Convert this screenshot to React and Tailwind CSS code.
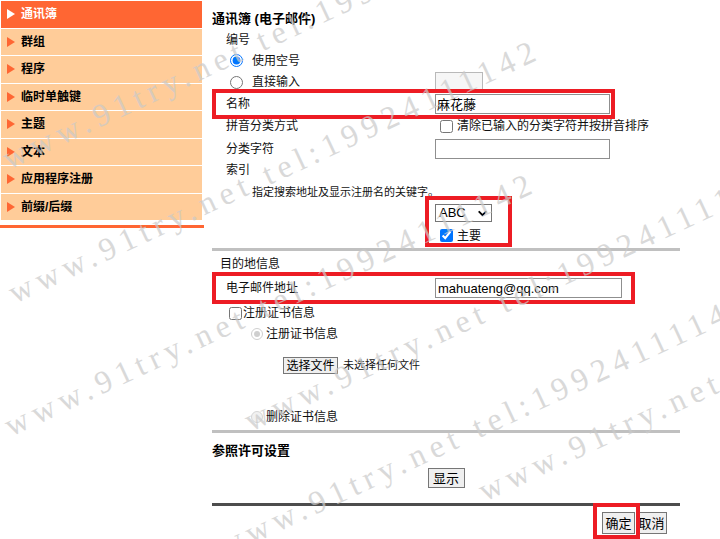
import { ChevronDown } from "lucide-react";

const menu = ["通讯簿", "群组", "程序", "临时单触键", "主题", "文本", "应用程序注册", "前缀/后缀"];

// faint diagonal watermark lines
const marks = [
  { x: -6, y: 138 },
  { x: 0, y: 272 },
  { x: -4, y: 405 },
  { x: 236, y: 400 },
  { x: 210, y: 525 },
  { x: 470, y: 470 },
];

function Arrow({ active }) {
  return (
    <svg width="8" height="10" viewBox="0 0 8 10" className="shrink-0">
      <polygon points="0,0 8,5 0,10" fill={active ? "#ffffff" : "#ff6633"} />
    </svg>
  );
}

function Btn({ children, className = "" }) {
  return (
    <button
      className={`flex items-center justify-center border border-[#767676] bg-[#efefef] text-black leading-none ${className}`}
    >
      {children}
    </button>
  );
}

export default function App() {
  return (
    <div className="relative flex h-[539px] w-[720px] overflow-hidden bg-white font-['Liberation_Sans','Noto_Sans_CJK_SC',sans-serif] text-[12px] text-[#111]">
      {/* side menu */}
      <div className="w-[204px] shrink-0">
        {menu.map((m, i) => (
          <div
            key={m}
            className={`ml-px flex h-[27.5px] w-[201px] items-center gap-[6px] border-t border-white pl-[6px] text-[12px] font-bold ${
              i === 0 ? "bg-[#ff6633] text-white" : "bg-[#ffcc99] text-black"
            }`}
          >
            <Arrow active={i === 0} />
            <span>{m}</span>
          </div>
        ))}
        <div className="mt-[5px] h-[3px] w-[204px] bg-[#ff6633]" />
      </div>

      {/* form */}
      <div className="ml-[8px] w-[468px]">
        <div className="mt-[9px] flex h-[20px] items-center text-[13px] font-bold text-black">
          通讯簿 (电子邮件)
        </div>
        <div className="mt-px flex h-[20px] items-center pl-[14px]">编号</div>
        <div className="flex h-[21px] items-center pl-[18px]">
          <input type="radio" name="num" defaultChecked className="m-0 h-[13px] w-[13px]" />
          <span className="ml-[9px]">使用空号</span>
        </div>
        <div className="flex h-[22px] items-center">
          <div className="flex w-[223px] items-center pl-[18px]">
            <input type="radio" name="num" className="m-0 h-[13px] w-[13px]" />
            <span className="ml-[9px]">直接输入</span>
          </div>
          <div className="h-[20px] w-[48px] border border-[#b9b9b9] bg-[#f6f6f6]" />
        </div>
        <div className="flex h-[21px] items-center">
          <div className="w-[223px] pl-[14px]">名称</div>
          <input
            readOnly
            value="麻花藤"
            className="h-[20px] w-[175px] border border-[#8f8f8f] px-[1px] text-[13px] text-black"
          />
        </div>
        <div className="flex h-[24px] items-center">
          <div className="w-[223px] pl-[14px]">拼音分类方式</div>
          <input type="checkbox" className="m-0 ml-[5px] h-[13px] w-[13px]" />
          <span className="ml-[4px]">清除已输入的分类字符并按拼音排序</span>
        </div>
        <div className="flex h-[21px] items-center">
          <div className="w-[223px] pl-[14px]">分类字符</div>
          <div className="h-[20px] w-[175px] border border-[#8f8f8f]" />
        </div>
        <div className="flex h-[22px] items-center pl-[14px]">索引</div>
        <div className="flex h-[22px] items-center pl-[40px] text-[11px]">指定搜索地址及显示注册名的关键字。</div>
        <div className="flex h-[20px] items-center pl-[223px]">
          <div className="flex h-[18px] w-[57px] items-center justify-between border border-[#767676] pl-[3px] pr-[2px] text-[13px] text-black">
            <span>ABC</span>
            <ChevronDown size={13} strokeWidth={3.5} color="#000" />
          </div>
        </div>
        <div className="flex h-[25px] items-center pl-[228px]">
          <input type="checkbox" defaultChecked className="m-0 h-[13px] w-[13px]" />
          <span className="ml-[4px]">主要</span>
        </div>
        <div className="h-[3px] w-[468px] bg-[#c0c0c0]" />
        <div className="flex h-[25px] items-center pl-[8px]">目的地信息</div>
        <div className="flex h-[24px] items-center">
          <div className="w-[223px] pl-[14px]">电子邮件地址</div>
          <input
            readOnly
            value="mahuateng@qq.com"
            className="h-[20px] w-[187px] border border-[#8f8f8f] px-[2px] text-[13px] text-black"
          />
        </div>
        <div className="flex h-[26px] items-center pl-[17px]">
          <input type="checkbox" className="m-0 h-[13px] w-[13px]" />
          <span className="ml-px">注册证书信息</span>
        </div>
        <div className="flex h-[16px] items-center pl-[39px]">
          <span className="flex h-[12px] w-[12px] items-center justify-center rounded-full border border-[#cfcfcf] bg-white">
            <span className="h-[6px] w-[6px] rounded-full bg-[#cfcfcf]" />
          </span>
          <span className="ml-[3px]">注册证书信息</span>
        </div>
        <div className="mt-[15px] flex h-[17px] items-center pl-[71px]">
          <Btn className="h-[17px] w-[55px] text-[12px]">选择文件</Btn>
          <span className="ml-[5px] text-[11px]">未选择任何文件</span>
        </div>
        <div className="mt-[33px] flex h-[20px] items-center pl-[39px]">
          <span className="h-[12px] w-[12px] rounded-full border border-[#d6d6d6] bg-[#f1f1f1]" />
          <span className="ml-[3px]">删除证书信息</span>
        </div>
        <div className="mt-[3px] h-[3px] w-[468px] bg-[#c0c0c0]" />
        <div className="mt-[8px] flex h-[20px] items-center text-[13px] font-bold text-black">参照许可设置</div>
        <div className="mt-[7px] flex justify-center">
          <Btn className="h-[20px] w-[37px] text-[13px]">显示</Btn>
        </div>
        <div className="mt-[15px] h-[3px] w-[468px] bg-[#4d4d4d]" />
        <div className="mt-[6px] flex justify-end gap-px pr-[13px]">
          <Btn className="h-[22px] w-[33px] text-[13px]">确定</Btn>
          <Btn className="h-[22px] w-[31px] text-[13px]">取消</Btn>
        </div>
      </div>

      {/* red annotation frames */}
      <div className="pointer-events-none absolute left-[212px] top-[89px] h-[30px] w-[403px] border-4 border-[#ed1c24]" />
      <div className="pointer-events-none absolute left-[425px] top-[196px] h-[51px] w-[87px] border-4 border-[#ed1c24]" />
      <div className="pointer-events-none absolute left-[212px] top-[272px] h-[32px] w-[423px] border-4 border-[#ed1c24]" />
      <div className="pointer-events-none absolute left-[593px] top-[503px] h-[36px] w-[47px] border-4 border-[#ed1c24]" />

      {/* watermark */}
      <div className="pointer-events-none absolute inset-0 overflow-hidden">
        {marks.map((p, i) => (
          <div
            key={i}
            className="absolute origin-top-left -rotate-[25deg] whitespace-nowrap font-['Liberation_Serif',serif] text-[32px] tracking-[6px] text-[#cacaca] opacity-70"
            style={{ left: p.x, top: p.y }}
          >
            www.91try.net tel:19924111142
          </div>
        ))}
      </div>
    </div>
  );
}
